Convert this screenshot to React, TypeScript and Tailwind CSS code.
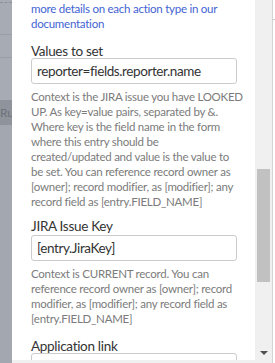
import React from 'react'

const font = { fontFamily: 'Lato, "Open Sans", sans-serif' }

function Label({ children, className }: { children: React.ReactNode; className?: string }) {
  return <div className={'text-[13.5px] leading-[14px] tracking-[-0.3px] text-[#333] ' + (className ?? '')}>{children}</div>
}

function Field({ value, className }: { value?: string; className?: string }) {
  return (
    <div
      className={
        'h-[26px] w-[206px] rounded-[3px] border border-[#ccc] bg-white px-[5px] text-[13.5px] leading-[24px] tracking-[-0.4px] whitespace-nowrap text-[#333] ' +
        (className ?? '')
      }
    >
      {value}
    </div>
  )
}

function Help({ lines }: { lines: string[] }) {
  return (
    <div className="mt-[5px] text-[11.5px] leading-[15px] tracking-[-0.25px] whitespace-nowrap text-[#7b7b7b]">
      {lines.map((l) => (
        <div key={l}>{l}</div>
      ))}
    </div>
  )
}

export default function App() {
  return (
    <div className="flex h-[363px] w-[275px] overflow-hidden bg-white" style={font}>
      {/* page behind the dialog */}
      <div className="flex w-[12px] shrink-0 flex-col bg-[#a7acb4]">
        <div className="h-[3px] border-b border-dashed border-[#8c9199]" />
        <div className="h-[32px] border-b border-[#9a9fa7]" />
        <div className="h-[23px] border-b border-[#9a9fa7]" />
        <div className="h-[42px]" />
        <div className="flex h-[25px] items-center overflow-hidden bg-[#8f949c] text-[12px] text-[#6d7179]">Ru</div>
        <div className="flex-1 bg-[#a3a8b0]" />
      </div>

      {/* dialog body */}
      <div className="flex flex-1 flex-col overflow-hidden">
        <div className="flex-1 overflow-hidden pl-[19px] pt-[1px]">
          <div className="text-[11.5px] leading-[15px] tracking-[-0.25px] whitespace-nowrap text-[#3f63d3]">
            <div>more details on each action type in our</div>
            <div>documentation</div>
          </div>

          <Label className="mt-[13px]">Values to set</Label>
          <Field value="reporter=fields.reporter.name" />
          <Help
            lines={[
              'Context is the JIRA issue you have LOOKED',
              'UP. As key=value pairs, separated by &.',
              'Where key is the field name in the form',
              'where this entry should be',
              'created/updated and value is the value to',
              'be set. You can reference record owner as',
              '[owner]; record modifier, as [modifier]; any',
              'record field as [entry.FIELD_NAME]',
            ]}
          />

          <Label className="mt-[10px]">JIRA Issue Key</Label>
          <Field value="[entry.JiraKey]" className="mt-[2px]" />
          <Help
            lines={[
              'Context is CURRENT record. You can',
              'reference record owner as [owner]; record',
              'modifier, as [modifier]; any record field as',
              '[entry.FIELD_NAME]',
            ]}
          />

          <Label className="mt-[13px]">Application link</Label>
          <Field />
        </div>
        <div className="h-[3px] shrink-0 bg-[#f0f0f0]" />
      </div>

      {/* scrollbar */}
      <div className="relative w-[17px] shrink-0 bg-[#f0f0f0]">
        <div className="absolute left-[2px] top-[169px] h-[113px] w-[13px] bg-[#c1c1c1]" />
        <div className="absolute bottom-[8px] left-[5px] h-0 w-0 border-x-[4px] border-t-[4px] border-x-transparent border-t-[#505050]" />
      </div>
      <div className="w-[3px] shrink-0 border-l border-[#d4d4d4]">
        <div className="mt-[19px] h-px bg-[#c8c8c8]" />
      </div>
    </div>
  )
}
